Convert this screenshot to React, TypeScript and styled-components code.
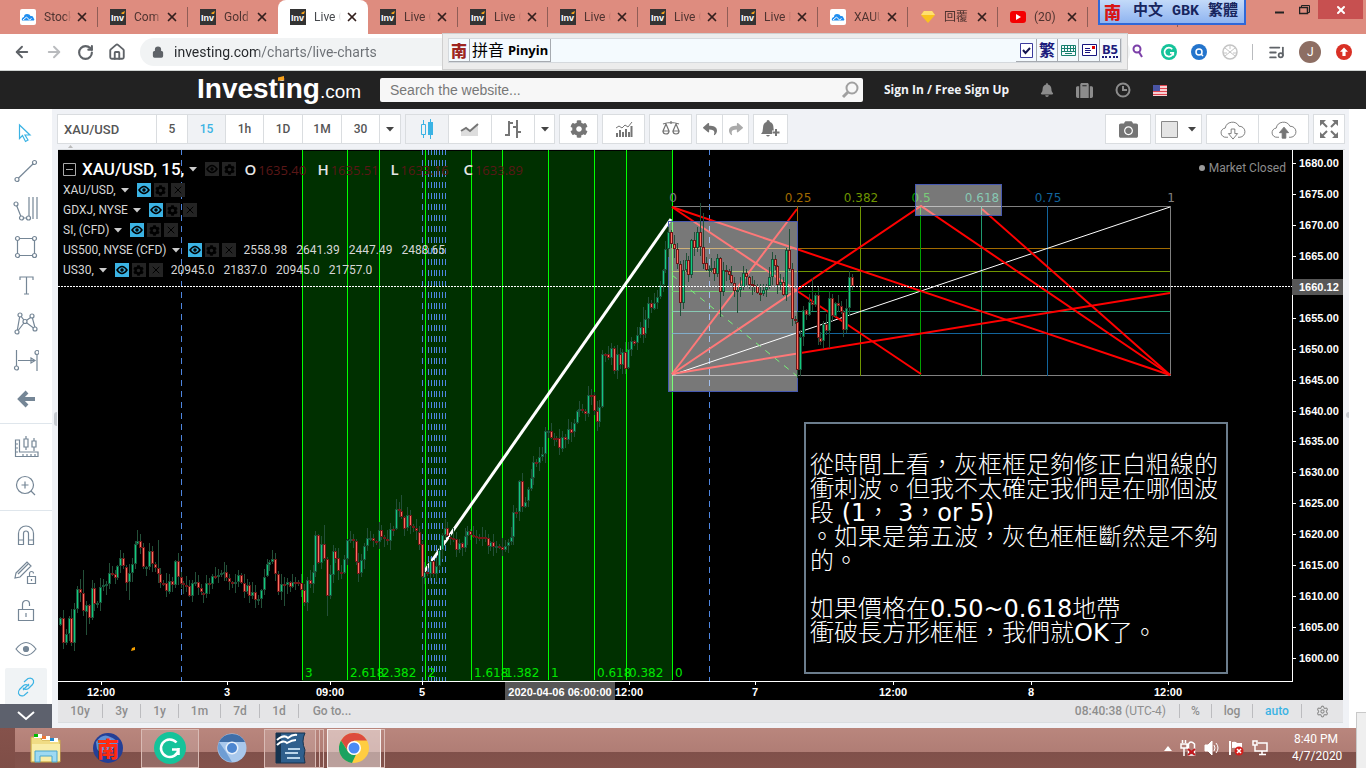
import { ReactNode } from "react"
import {
  ArrowLeft,
  ArrowRight,
  Home,
  ListMusic,
  Lock,
  RotateCw,
  Search,
  Settings,
  X
} from "lucide-react"
import {
  FaBell,
  FaCamera,
  FaCog,
  FaReply,
  FaShare,
  FaSuitcase
} from "react-icons/fa"
import styled, { createGlobalStyle, css } from "styled-components"

const ui = `Roboto, "Open Sans", "Noto Sans CJK TC", sans-serif`
const arial = `"Liberation Sans", Arial, sans-serif`
const verdana = `"DejaVu Sans", Verdana, "Noto Sans CJK TC", sans-serif`
const line = "#dadde0"
const slate = "#758696"
const accent = "#3bb3e4"

const GlobalStyle = createGlobalStyle`
  * {
    box-sizing: border-box;
  }

  body {
    margin: 0;
    overflow: hidden;
    font-family: ${ui};
    font-size: 12px;
  }

  button {
    margin: 0;
    padding: 0;
    border: 0;
    background: none;
    font: inherit;
    color: inherit;
  }

  a {
    color: inherit;
    text-decoration: none;
  }

  svg {
    display: block;
    flex: none;
  }
`

const Page = styled.div`
  display: flex;
  flex-direction: column;
  height: 100vh;
  background: #fff;
`

/* ---------- browser ---------- */

const TabStrip = styled.div`
  position: relative;
  display: flex;
  flex: none;
  height: 34px;
  padding-left: 8px;
  background: #de8c7f;
`

const TabButton = styled.div<{ $active?: boolean; $bare?: boolean }>`
  display: flex;
  align-items: center;
  flex: 0 1 90px;
  gap: 8px;
  min-width: 0;
  padding: 0 9px 0 12px;
  color: #4e3330;
  background: linear-gradient(#8f5d56, #8f5d56) right center / 1px 20px
    no-repeat;

  ${({ $active }) =>
    $active &&
    css`
      border-radius: 8px 8px 0 0;
      background: #fff;
      color: #45484c;
    `}
  ${({ $bare }) =>
    $bare &&
    css`
      background-image: none;
    `}
`

const TabTitle = styled.button`
  flex: 1;
  height: 18px;
  overflow: hidden;
  text-align: left;
  white-space: nowrap;
  line-height: 18px;
  font-size: 12px;
  mask-image: linear-gradient(90deg, #000 75%, transparent);
`

const TabClose = styled.button`
  margin-left: -4px;
  color: #33201e;
`

const WindowButtons = styled.div`
  position: absolute;
  top: 0;
  right: 3px;
  display: flex;
`

const WindowButton = styled.button<{ $close?: boolean }>`
  display: flex;
  align-items: center;
  justify-content: center;
  width: ${({ $close }) => ($close ? 45 : 26)}px;
  height: 19px;
  background: ${({ $close }) => ($close ? "#c75050" : "none")};
`

const ImeTitle = styled.div`
  position: absolute;
  top: 0;
  right: 120px;
  z-index: 2;
  display: flex;
  align-items: center;
  gap: 12px;
  width: 148px;
  height: 25px;
  padding-left: 4px;
  border: 2px solid #2f68d8;
  border-top: 0;
  background: linear-gradient(#c3daf9, #8fb4f0);
  color: #17255e;
  font: 700 15px/20px "Liberation Mono", "Noto Sans CJK TC", monospace;
  white-space: nowrap;
`

const NanMark = styled.span<{ $small?: boolean }>`
  color: ${({ $small }) => ($small ? "#9d2622" : "#d81515")};
  font: 900 17px/20px "Noto Sans CJK TC", sans-serif;
`

const AddressBar = styled.div`
  position: relative;
  display: flex;
  align-items: center;
  flex: none;
  height: 37px;
  padding: 0 14px 0 13px;
  border-bottom: 1px solid #cfd3d1;
  background: #fff;
  color: #5f6368;
`

const NavButtons = styled.div`
  display: flex;
  gap: 14px;
  margin-right: 14px;

  button:nth-child(2) {
    color: #b9bbbe;
  }
`

const Omnibox = styled.label`
  display: flex;
  align-items: center;
  flex: 1;
  gap: 10px;
  height: 28px;
  padding-left: 12px;
  border-radius: 14px;
  background: #f1f3f4;

  input {
    width: 260px;
    border: 0;
    padding: 0;
    outline: 0;
    font: 14px/20px ${ui};
    color: transparent;
    background: linear-gradient(90deg, #24272a 84px, #6b6f74 84px);
    background-clip: text;
    -webkit-background-clip: text;
  }
`

const Extensions = styled.div`
  display: flex;
  align-items: center;
  justify-content: space-between;
  width: 222px;
  padding-left: 2px;
`

const Avatar = styled.span`
  width: 22px;
  border-radius: 50%;
  background: #8d6e63;
  color: #fff;
  line-height: 22px;
  text-align: center;
`

const ImeBar = styled.div`
  position: absolute;
  top: -1px;
  right: 238px;
  left: 442px;
  height: 37px;
  padding: 4px 5px;
  border: 1px solid #cfcfcf;
  background: #ececec;
`

const ImeInner = styled.div`
  display: flex;
  height: 25px;
  border: 1px solid #d5d9dd;
  background: #f4fafe;
`

const ImeCell = styled.button<{ $wide?: boolean; $ink?: boolean }>`
  display: flex;
  align-items: center;
  justify-content: center;
  width: ${({ $wide }) => ($wide ? 81 : 21)}px;
  border: solid #a6aab0;
  border-width: 0 1px 1px 0;
  color: ${({ $ink }) => ($ink ? "#1b1b7c" : "#000")};
  font: 700 13px/20px "Noto Sans", "Noto Sans CJK TC", sans-serif;
  white-space: nowrap;

  span {
    margin-right: 4px;
    font-weight: 400;
    font-size: 16px;
  }
`

const ImeMark = styled(ImeCell)`
  span {
    margin: 0;
    font-weight: 900;
  }
`

const ImeChar = styled(ImeCell)`
  font-size: 16px;
`

const Underlined = styled.u`
  display: block;
  border-bottom: 2px dotted #1b1b7c;
  line-height: 14px;
  text-decoration: none;
`

const tick = (
  <svg width="13" height="15" fill="#fff" stroke="#3a3a9c">
    <path d="M.5.500h12v14H.5z" />
    <path d="M3 7l2.500 3L10 5" stroke="#161650" strokeWidth="2" fill="none" />
  </svg>
)

const ImeTools = styled.div`
  display: flex;
  margin-left: auto;

  label {
    position: relative;
    display: flex;
    align-items: center;
    justify-content: center;
    width: 21px;
    border: solid #a6aab0;
    border-width: 0 1px 1px 0;
  }

  input {
    position: absolute;
    inset: 0;
    margin: 0;
    opacity: 0;
  }
`

const grammarlyMark =
  "M22.500 10.500A8.800 8.800 0 1 0 24.500 17.500H18M24.500 16v7"

const Favicon = ({ kind }: { kind: string }) => {
  if (kind === "inv")
    return (
      <svg width="16" height="16" viewBox="0 0 16 16">
        <path d="M0 0h16v16H0z" fill="#333" />
        <text x="1" y="12" fill="#fff" fontSize="9" fontWeight="700" fontFamily="Liberation Sans">
          Inv
        </text>
        <path d="M11 4l4-2-1 3h-2z" fill="#f7a21b" />
      </svg>
    )
  if (kind === "cloud")
    return (
      <svg width="16" height="16" viewBox="0 0 16 16">
        <rect width="16" height="16" rx="2" fill="#fff" />
        <path
          d="M2 11.500q-1-2.500 2-3.500 0-3 3-3t3.500 2q3-.5 3 2 1.500 1 .5 2.500z"
          fill="#1e8df0"
        />
        <path d="M3 11l3.500-3 3 3 2-1.500" stroke="#fff" fill="none" />
      </svg>
    )
  if (kind === "gem")
    return (
      <svg width="16" height="16" viewBox="0 0 16 16">
        <path d="M4 2h8l3 4-7 8-7-8z" fill="#f9c31f" />
        <path d="M4 2h8l3 4H1z" fill="#ffe070" />
      </svg>
    )
  return (
    <svg width="16" height="16" viewBox="0 0 16 16">
      <rect y="2" width="16" height="12" rx="3" fill="#f40000" />
      <path d="M6 5l5 3-5 3z" fill="#fff" />
    </svg>
  )
}

const tabs = [
  ["cloud", "Stock"],
  ["inv", "Com"],
  ["inv", "Gold"],
  ["inv", "Live C"],
  ["inv", "Live C"],
  ["inv", "Live C"],
  ["inv", "Live C"],
  ["inv", "Live C"],
  ["inv", "Live F"],
  ["cloud", "XAUU"],
  ["gem", "回覆"],
  ["tube", "(20)"]
]

const Browser = () => (
  <>
    <TabStrip>
      {tabs.map(([kind, title], i) => (
        <TabButton key={i} $active={i === 3} $bare={i === 2}>
          <Favicon kind={kind} />
          <TabTitle>{title}</TabTitle>
          <TabClose aria-label="Close tab">
            <X size={14} strokeWidth={3} />
          </TabClose>
        </TabButton>
      ))}
      <TabButton />
      <ImeTitle>
        <NanMark>南</NanMark>
        <span>中文 GBK 繁體</span>
      </ImeTitle>
      <WindowButtons>
        <WindowButton aria-label="Minimize">
          <svg width="9" height="19">
            <path d="M0 12.500h9" stroke="#222" strokeWidth="2" />
          </svg>
        </WindowButton>
        <WindowButton aria-label="Restore">
          <svg width="12" height="12" fill="none" stroke="#222">
            <path d="M2.500 3V1.500h8v7H9" />
            <path d="M.5 3.500h8v6h-8z" strokeWidth="1.500" />
          </svg>
        </WindowButton>
        <WindowButton $close aria-label="Close">
          <X size={12} color="#fff" strokeWidth={4} />
        </WindowButton>
      </WindowButtons>
    </TabStrip>
    <AddressBar>
      <NavButtons>
        <button aria-label="Back">
          <ArrowLeft size={18} strokeWidth={2.5} />
        </button>
        <button aria-label="Forward">
          <ArrowRight size={18} strokeWidth={2.5} />
        </button>
        <button aria-label="Reload">
          <RotateCw size={17} strokeWidth={3} />
        </button>
        <button aria-label="Home">
          <Home size={18} strokeWidth={2.5} />
        </button>
      </NavButtons>
      <Omnibox>
        <Lock size={12} fill="#5f6368" strokeWidth={2.5} />
        <input aria-label="Address" defaultValue="investing.com/charts/live-charts" />
      </Omnibox>
      <Extensions>
        <svg width="14" height="16" fill="none" stroke="#7b3fa8" strokeWidth="2">
          <circle cx="5" cy="5" r="3.500" />
          <path d="M7 8l3 5" />
        </svg>
        <svg width="16" height="16" viewBox="0 0 32 32">
          <circle cx="16" cy="16" r="16" fill="#15c39a" />
          <path d={grammarlyMark} stroke="#fff" strokeWidth="3.5" fill="none" />
        </svg>
        <svg width="16" height="16" viewBox="0 0 16 16">
          <circle cx="8" cy="8" r="8" fill="#2374cc" />
          <circle cx="8" cy="8" r="3" fill="none" stroke="#fff" strokeWidth="1.5" />
          <path d="M10 10l2 2" stroke="#fff" strokeWidth="1.5" />
        </svg>
        <svg width="16" height="16" viewBox="0 0 16 16" fill="none" stroke="#c4c4c4">
          <circle cx="8" cy="8" r="7" strokeWidth="1.5" />
          <path d="M3 4l10 8M13 4L3 12M8 1v4M1 9h4M11 9h4" />
        </svg>
        <svg width="1" height="16">
          <path d="M.5 0v16" stroke="#b9bbbe" />
        </svg>
        <ListMusic size={17} strokeWidth={2.5} />
        <Avatar>J</Avatar>
        <svg width="16" height="16" viewBox="0 0 16 16">
          <circle cx="8" cy="8" r="8" fill="#d93025" />
          <path d="M8 3.500l4 4.300H9.600V12H6.400V7.800H4z" fill="#fff" />
        </svg>
      </Extensions>
      <ImeBar>
        <ImeInner>
          <ImeMark>
            <NanMark $small>南</NanMark>
          </ImeMark>
          <ImeCell $wide>
            <span>拼音</span>Pinyin
          </ImeCell>
          <ImeTools>
            <label>
              <input type="checkbox" defaultChecked aria-label="Input on" />
              {tick}
            </label>
            <ImeChar $ink>繁</ImeChar>
            <ImeCell aria-label="Keyboard">
              <svg width="15" height="11" stroke="#16806e" fill="none">
                <path d="M.5.500h14v10H.5zM1 3.500h13M1 6.500h13M3.500 1v6M6.500 1v6M9.500 1v6M12.500 1v6M4 8.500h7" />
              </svg>
            </ImeCell>
            <ImeCell aria-label="Mail">
              <svg width="15" height="12" stroke="#161680" fill="#fff">
                <path d="M.5.500h14v11H.5zM3 4.500h5M3 6.500h6M3 8.500h5" />
                <path d="M10 2h3v3h-3z" fill="#d00" stroke="none" />
              </svg>
            </ImeCell>
            <ImeCell $ink>
              <Underlined>B5</Underlined>
            </ImeCell>
          </ImeTools>
        </ImeInner>
      </ImeBar>
    </AddressBar>
  </>
)

/* ---------- site header ---------- */

const SiteHeader = styled.header`
  display: flex;
  align-items: center;
  flex: none;
  height: 38px;
  padding-left: 197px;
  background: #222;
  color: #fff;
`

const Logo = styled.a`
  position: relative;
  display: flex;
  align-items: baseline;
  width: 167px;
  margin-right: 16px;
  font: 700 28px/36px ${arial};

  small {
    font-weight: 400;
    font-size: 19px;
  }

  svg {
    position: absolute;
    top: 5px;
    left: 81px;
  }
`

const SearchBox = styled.label`
  display: flex;
  align-items: center;
  width: 483px;
  height: 24px;
  padding: 0 4px 0 10px;
  border-radius: 2px;
  background: #f7f7f7;
  color: #9a9a9a;

  input {
    flex: 1;
    padding: 0;
    border: 0;
    outline: 0;
    background: none;
    font: 14px/20px ${arial};

    &::placeholder {
      color: #777;
    }
  }
`

const SignIn = styled.a`
  width: 156px;
  margin-left: 21px;
  font: 700 12px/16px "Open Sans", sans-serif;
  color: #f0f3f7;
  white-space: nowrap;
`

const HeaderIcons = styled.div`
  display: flex;
  align-items: center;
  gap: 22px;
  color: #8c8c8c;
`

const Header = () => (
  <SiteHeader>
    <Logo href="#">
      Investing<small>.com</small>
      <svg width="6" height="6">
        <path d="M0 1.500L6 0v4L0 5z" fill="#f7a21b" />
      </svg>
    </Logo>
    <SearchBox>
      <input aria-label="Search" placeholder="Search the website..." />
      <svg width="18" height="18" fill="none" stroke="#a0a0a0" strokeWidth="2">
        <circle cx="11" cy="7" r="5.500" />
        <path d="M7 11l-5 5" strokeWidth="3" />
      </svg>
    </SearchBox>
    <SignIn href="#">Sign In / Free Sign Up</SignIn>
    <HeaderIcons>
      <FaBell size={14} />
      <FaSuitcase size={17} />
      <svg width="16" height="16" fill="none" stroke="#8c8c8c" strokeWidth="2">
        <circle cx="8" cy="8" r="6.500" />
        <path d="M8 4v4h4" />
      </svg>
      <svg width="14" height="11">
        <path d="M0 0h14v11H0z" fill="#fff" />
        <path d="M0 .5h14M0 3.500h14M0 6.500h14M0 9.500h14" stroke="#e0454f" strokeWidth="1.500" />
        <path d="M0 0h7v6H0z" fill="#4a55a5" />
      </svg>
    </HeaderIcons>
  </SiteHeader>
)

/* ---------- drawing tools ---------- */

const Body = styled.main`
  display: flex;
  flex: 1;
  min-height: 0;
`

const Sidebar = styled.nav`
  position: relative;
  flex: none;
  width: 52px;
  padding-top: 5px;
  overflow: hidden;
  background: #fff;
`

const Tool = styled.button<{ $on?: boolean; $first?: boolean }>`
  display: flex;
  align-items: center;
  justify-content: center;
  width: 42px;
  height: 38px;
  margin: 0 5px;
  border-radius: 2px;
  background: ${({ $on }) => ($on ? "#f0f3f5" : "none")};
  color: ${({ $on, $first }) => ($on || $first ? accent : slate)};
`

const Divider = styled.hr`
  height: 1px;
  margin: 5px 0;
  border: 0;
  background: #dfe6ec;
`

const SidebarMore = styled.button`
  position: absolute;
  bottom: 0;
  left: 0;
  display: flex;
  align-items: center;
  justify-content: center;
  width: 52px;
  height: 24px;
  background: #5d616d;
  color: #fff;
`

const Draw = ({ children }: { children: ReactNode }) => (
  <svg
    width="26"
    height="26"
    viewBox="0 0 26 26"
    fill="none"
    stroke="currentColor"
    strokeWidth="1.2"
  >
    {children}
  </svg>
)

const dots = (points: number[][]) =>
  points.map(([x, y]) => <circle key={`${x}-${y}`} cx={x} cy={y} r="2" fill="#fff" />)

const drawTools: [string, ReactNode][] = [
  ["Cursor", <path d="M6.500 5v13.500l3-3 3 6 2.500-1.500-3-5h5z" />],
  ["Trend line", <><path d="M4 21.500L21.500 4.500" />{dots([[4, 21.500], [21.500, 4.500]])}</>],
  ["Pitchfork", <><path d="M3 8l5.500 14h7.500V1M20 1v22M24 1v22" />{dots([[3, 8], [8.500, 22], [15.500, 22]])}</>],
  ["Shape", <><path d="M4.500 4.500h17v17h-17z" />{dots([[4.500, 4.500], [21.500, 4.500], [4.500, 21.500], [21.500, 21.500]])}</>],
  ["Text", <path d="M7 8V5h13v3M13.500 5v17M11 22h5" />],
  ["Pattern", <><path d="M4 22L7 5l5 6.500 7-5 3.500 13L12 11.500z" />{dots([[4, 22], [7, 5], [12, 11.500], [19, 6], [22, 19]])}</>],
  ["Measure", <><path d="M3.500 2v18M24 6v17M5 12.500h16M18 10l4 2.500-4 2.500z" />{dots([[3.500, 20], [24, 4.500]])}</>],
  ["Back", <path d="M14 6l-7 7 7 7M8 13h14" strokeWidth="4" />]
]

const chartTools: [string, ReactNode][] = [
  ["Scales", <path d="M2.500 5v16.500H25v-4.500H6.500V5zM3 9h2M3 13h2M3 17h2M10 19v2M14 19v2M18 19v2M22 19v2M11 4h4v8h-4zM13 1v3M13 12v3M19 6h4v6h-4zM21 3v3M21 12v4" />],
  ["Zoom in", <><circle cx="12" cy="12" r="8.500" /><path d="M8.500 12h7M12 8.500v7M18 18l4 4" /></>]
]

const lockTools: [string, ReactNode][] = [
  ["Magnet", <path d="M5.500 22.500V11.500a7.500 7.500 0 0 1 15 0v11h-5V11.500a2.500 2.500 0 0 0-5 0v11zM5.500 18h5M15.500 18h5" />],
  ["Lock drawings", <path d="M3 13L14 2l4 4L7 17l-5 1zM5 14L15 4M14.500 16.500h8v7h-8zM16.500 16v-2.500a2 2 0 0 1 4 0M18.500 19v2" />],
  ["Lock", <path d="M5.500 11.500h15v11h-15zM9.500 11V6a3.500 3.500 0 0 1 7 0v2M13 15v4" />],
  ["Visibility", <><path d="M3 13q10-13 20 0q-10 13-20 0z" /><circle cx="13" cy="13" r="2.500" fill="currentColor" /></>],
  ["Link", <path d="M11 8l4-3.500q4-1.500 5.500 2 .5 2-1 4l-4 4q-3 2-5.500-.5M15 18l-4 3.500q-4 1.500-5.500-2-.5-2 1-4l4-4q3-2 5.500.500M10 16l6-6" />]
]

const renderTools = (tools: [string, ReactNode][]) =>
  tools.map(([name, icon]) => (
    <Tool key={name} aria-label={name} $on={name === "Link"} $first={name === "Cursor"}>
      <Draw>{icon}</Draw>
    </Tool>
  ))

/* ---------- chart toolbar ---------- */

const Workspace = styled.section`
  position: relative;
  display: flex;
  flex: 1;
  flex-direction: column;
  min-width: 0;
  margin-right: 17px;
  padding: 5px 4px 5px 5px;
  background: #f0f2f6;
`

const Handle = styled.div<{ $right?: boolean }>`
  position: absolute;
  top: 303px;
  ${({ $right }) => ($right ? "right: 0" : "left: 2px")};
  width: 3px;
  height: ${({ $right }) => ($right ? 6 : 14)}px;
  border-radius: 3px 0 0 3px;
  background: #c6cad0;
`

const Toolbar = styled.div`
  display: flex;
  flex: none;
  gap: 4px;
  height: 30px;
`

const Group = styled.div<{ $push?: boolean }>`
  display: flex;
  border: 1px solid ${line};
  background: #fff;
  margin-left: ${({ $push }) => ($push ? "auto" : 0)};
`

const ToolbarButton = styled.button<{ $w: number; $on?: boolean; $symbol?: boolean }>`
  display: flex;
  align-items: center;
  justify-content: ${({ $symbol }) => ($symbol ? "flex-start" : "center")};
  gap: 10px;
  width: ${({ $w }) => $w}px;
  padding-left: ${({ $symbol }) => ($symbol ? 6 : 0)}px;
  color: ${({ $on }) => ($on ? accent : "#555")};
  background: ${({ $on }) => ($on ? "#f0f2f5" : "none")};
  font-weight: 500;
  font-size: ${({ $symbol }) => ($symbol ? 13 : 12)}px;

  & + & {
    border-left: 1px solid ${line};
  }
`

const Shelf = styled.div`
  flex: none;
  height: 6px;
  margin-left: 1px;
  border-bottom: 1px solid ${line};

  svg {
    margin-left: 10px;
  }
`

const Caret = ({ color = "#444" }: { color?: string }) => (
  <svg width="8" height="5">
    <path d="M0 0h8L4 4.500z" fill={color} />
  </svg>
)

const intervals: [string, number][] = [
  ["5", 31],
  ["15", 38],
  ["1h", 38],
  ["1D", 39],
  ["1M", 39],
  ["30", 38]
]

const gray = "#757575"
const cloud = "M8 21H6a5 5 0 0 1-1-10 8 8 0 0 1 15-2A6 6 0 0 1 21 21h-2"

const ChartToolbar = () => (
  <Toolbar>
    <Group>
      <ToolbarButton $w={98} $symbol>
        XAU/USD
      </ToolbarButton>
      {intervals.map(([name, width]) => (
        <ToolbarButton key={name} $w={width} $on={name === "15"}>
          {name}
        </ToolbarButton>
      ))}
      <ToolbarButton $w={21} aria-label="More intervals">
        <Caret />
      </ToolbarButton>
    </Group>
    <Group>
      <ToolbarButton $w={42} $on aria-label="Candles">
        <svg width="14" height="20" fill="none" stroke={accent}>
          <path d="M1.500 5.500h4v10h-4zM3.500 1v4M3.500 16v3M10.500 0v20" />
          <path d="M8 3h5v13H8z" fill={accent} stroke="none" />
        </svg>
      </ToolbarButton>
      <ToolbarButton $w={43} aria-label="Area">
        <svg width="20" height="14">
          <path d="M1 10l5-3 4 2 8-7v12H1z" fill="#ddd" />
          <path d="M1 9l5-3 4 3 8-7" stroke={gray} strokeWidth="2" fill="none" />
        </svg>
      </ToolbarButton>
      <ToolbarButton $w={43} aria-label="Bars">
        <svg width="18" height="20" fill="none" stroke={gray} strokeWidth="2">
          <path d="M5 2v15M1 16h4M5 4h4M13 1v18M9 8h4M13 13h4" />
        </svg>
      </ToolbarButton>
      <ToolbarButton $w={20} aria-label="More styles">
        <Caret />
      </ToolbarButton>
    </Group>
    <Group>
      <ToolbarButton $w={37} aria-label="Settings">
        <FaCog size={18} color={gray} />
      </ToolbarButton>
    </Group>
    <Group>
      <ToolbarButton $w={41} aria-label="Indicators">
        <svg width="18" height="16" fill="none" stroke={gray}>
          <path d="M2 16v-4M5 16V9M8 16v-5M11 16V8M14 16v-5M16.500 16V5" strokeWidth="2" />
          <path d="M1 7l3-2 3 2 3-3 3 2 4-5" />
        </svg>
      </ToolbarButton>
    </Group>
    <Group>
      <ToolbarButton $w={41} aria-label="Compare">
        <svg width="18" height="16" fill="none" stroke={gray} strokeWidth="1.200">
          <path d="M1 3q8-3 16 0M9 0v3M4 3l-3 7h6zM14 3l-3 7h6zM1 10q0 3 3 3t3-3M11 10q0 3 3 3t3-3" />
        </svg>
      </ToolbarButton>
    </Group>
    <Group>
      <ToolbarButton $w={25} aria-label="Undo">
        <FaReply size={14} color={gray} />
      </ToolbarButton>
      <ToolbarButton $w={26} aria-label="Redo">
        <FaShare size={14} color="#aaa" />
      </ToolbarButton>
    </Group>
    <Group>
      <ToolbarButton $w={33} aria-label="Add alert">
        <svg width="20" height="18">
          <path d="M7 0q1.500 0 2 2 3.500 1 3.500 6 0 4 1.500 6H0q2-2 2-6 0-5 3.500-6Q5.500 0 7 0zM5 15h4q-2 3-4 0z" fill={gray} />
          <path d="M11 12.500h8M15 9v8" stroke="#fff" strokeWidth="4" />
          <path d="M11.500 12.500h7M15 9v7" stroke={gray} strokeWidth="2" />
        </svg>
      </ToolbarButton>
    </Group>
    <Group $push>
      <ToolbarButton $w={44} aria-label="Snapshot">
        <FaCamera size={19} color={gray} />
      </ToolbarButton>
    </Group>
    <Group>
      <ToolbarButton $w={45} aria-label="Background">
        <svg width="17" height="17">
          <path d="M.5.500h16v16H.5z" fill="#e4e4e4" stroke="#888" />
        </svg>
        <Caret />
      </ToolbarButton>
    </Group>
    <Group>
      <ToolbarButton $w={51} aria-label="Load">
        <svg width="28" height="22" viewBox="-1 0 29 24" fill="none" stroke={gray}>
          <path d={cloud} />
          <path d="M11.500 12v5h-3l5 6 5-6h-3v-5z" />
        </svg>
      </ToolbarButton>
      <ToolbarButton $w={50} aria-label="Save">
        <svg width="28" height="22" viewBox="-1 0 29 24" fill="none" stroke={gray}>
          <path d={cloud} />
          <path d="M11.500 22v-6h-3l5-6 5 6h-3v6z" fill={gray} />
        </svg>
      </ToolbarButton>
    </Group>
    <Group>
      <ToolbarButton $w={30} aria-label="Full screen">
        <svg width="18" height="18" fill={gray} stroke={gray} strokeWidth="2">
          <path d="M0 0h6L0 6zM18 0v6l-6-6zM0 18v-6l6 6zM18 18h-6l6-6z" stroke="none" />
          <path d="M2 2l5 5M16 2l-5 5M2 16l5-5M16 16l-5-5" />
        </svg>
      </ToolbarButton>
    </Group>
  </Toolbar>
)

/* ---------- price chart ---------- */

const Panel = styled.div`
  position: relative;
  flex: 1;
  min-height: 0;
  overflow: hidden;
  margin-left: 1px;
  margin-right: 2px;
  background: #000;
`

const Plot = styled.svg`
  width: 100%;
  height: 100%;

  line,
  rect,
  path {
    shape-rendering: crispEdges;
  }

  .smooth {
    shape-rendering: auto;
  }
`

// closes are thirds of a pixel below `top`
const sessions = [
  {
    top: 430,
    closes: [
      565, 640, 613, 565, 640, 538, 478, 490, 545, 525, 563, 473, 520, 518, 470,
      465, 462, 430, 432, 445, 408, 385, 410, 458, 430, 402, 342, 332, 352, 413,
      410, 363, 402, 413, 432, 458, 460, 485, 452, 465, 393, 440, 460, 465, 468,
      497, 458, 457, 475, 488, 492, 460, 462, 437, 437, 435, 430, 427, 445, 457,
      457, 455, 435, 458, 485, 465, 498, 487, 512, 507, 480, 440, 403, 395, 387,
      433, 487, 463, 465, 455, 470, 455, 455, 458
    ]
  },
  {
    top: 400,
    closes: [
      570, 610, 540, 552, 517, 405, 490, 433, 478, 590, 523, 452, 475, 515, 520,
      478, 420, 418, 423, 485, 520, 480, 438, 415, 413, 422, 425, 390, 412, 417,
      422, 387, 388, 327, 333, 350, 385, 345, 378, 385, 395, 433, 533, 515, 520,
      482, 522, 497, 450, 405, 385, 410, 415, 418, 450, 430, 445, 408, 392, 405,
      408, 410, 410, 412, 415, 440, 425, 440, 438, 440, 450, 437, 425, 410, 335,
      335, 242, 320, 305, 268, 235, 187, 190, 172, 163, 93, 92, 113, 115, 115,
      145, 110, 120, 87, 98, 70, 33, 27, 33, 43, -15
    ]
  },
  {
    top: 150,
    closes: [
      735, 783, 815, 770, 612, 612, 625, 595, 663, 612, 645, 605, 655, 598, 572,
      580, 555, 530, 553, 508, 460, 475, 458, 440, 405, 360, 297, 247, 283, 298,
      343, 460, 360, 330, 375, 270, 293, 245, 290, 340, 362, 357, 355, 373, 325,
      427, 360, 362, 375, 400, 423, 420, 410, 368, 380, 403, 405, 408, 430, 433,
      420, 410, 382, 328, 348, 405, 395, 435, 300, 358, 508, 515, 660, 560, 480,
      495, 457, 465, 435, 563, 575, 523, 545, 445, 500, 460, 468, 485, 540, 475,
      382, 410
    ]
  }
]

const closes = sessions.flatMap(s => s.closes.map(c => s.top + c / 3))
const firstX = 60
const lastX = 852
const step = (lastX - firstX) / (closes.length - 1)

// long wicks: column, price line they reach
const spikes: [number, number][] = [
  [137, 530], [157, 540], [83, 570], [86, 635], [128, 600], [258, 605],
  [284, 606], [326, 616], [324, 525], [402, 495], [421, 600], [445, 520],
  [643, 307], [700, 203], [703, 213], [680, 316], [721, 317], [738, 313],
  [789, 229], [811, 278], [828, 348], [850, 271], [801, 376]
]

const buildCandles = () => {
  const out = { wick: "", upEdge: "", downEdge: "", up: "", down: "" }
  closes.forEach((close, i) => {
    const open = i ? closes[i - 1] : 625
    const x = Math.round(firstX + i * step)
    const top = Math.round(Math.min(open, close))
    const height = Math.max(2, Math.round(Math.abs(open - close)))
    const high = top - 1 - ((i * 7) % 10)
    const low = top + height + 1 + ((i * 5) % 9)
    out.wick += `M${x + 0.5} ${high}V${low}`
    const edge = `M${x - 1} ${top}h3v${height}h-3z`
    const fill = height > 2 ? `M${x} ${top + 1}h1v${height - 2}h-1z` : ""
    if (close < open) {
      out.upEdge += edge
      out.up += fill
    } else {
      out.downEdge += edge
      out.down += fill
    }
  })
  spikes.forEach(([x, y]) => {
    const i = Math.min(closes.length - 1, Math.round((x - firstX) / step))
    out.wick += `M${Math.round(firstX + i * step) + 0.5} ${y}V${closes[i]}`
  })
  return out
}

const candles = buildCandles()

const timeZones: [number, string][] = [
  [302, "3"],
  [347, "2.618"],
  [379, "2.382"],
  [425, "2"],
  [471, "1.618"],
  [502, "1.382"],
  [548, "1"],
  [594, "0.618"],
  [626, "0.382"],
  [672, "0"]
]

const breaks = [181, 422, 428, 431, 434, 436, 439, 442, 445, 709]

const gannColumns: [number, string, string][] = [
  [672, "0", "#808080"],
  [797, "0.25", "#a06a00"],
  [860, "0.382", "#6f9500"],
  [920, "0.5", "#00a000"],
  [981, "0.618", "#1f9970"],
  [1047, "0.75", "#12649c"],
  [1170, "1", "#808080"]
]

const gannRows: [number, string][] = [
  [206, "#808080"],
  [248, "#a06a00"],
  [271, "#6f9500"],
  [291, "#00a000"],
  [311, "#1f9970"],
  [333, "#12649c"],
  [375, "#808080"]
]

const fans = [
  "M672 207L1170 375",
  "M672 207L921 374",
  "M672 374L797 209",
  "M672 374L921 206L1170 375",
  "M672 374L1170 293",
  "M982 209L1170 375"
]

const times: [number, string][] = [
  [101, "12:00"],
  [227, "3"],
  [330, "09:00"],
  [422, "5"],
  [560, ""],
  [629, "12:00"],
  [755, "7"],
  [893, "12:00"],
  [1031, "8"],
  [1168, "12:00"]
]

const prices = Array.from({ length: 17 }, (_, i) => 1680 - i * 5)

const axisText = {
  fill: "#fff",
  fontFamily: "Liberation Sans",
  fontWeight: 700,
  fontSize: 11
}
const levelText = { fontFamily: "DejaVu Sans", fontSize: 12 }

const PriceChart = () => (
  <Plot viewBox="58 150 1285 550" preserveAspectRatio="xMinYMin meet">
    <rect x="302" y="151" width="370" height="530" fill="#003000" />
    {breaks.map(x => (
      <path key={x} d={`M${x + 0.5} 150V681`} stroke="#4f86e0" strokeDasharray="6 5" strokeDashoffset="1" />
    ))}
    {timeZones.map(([x, label]) => (
      <g key={x}>
        <path d={`M${x + 0.5} 150V680`} stroke="#00ff00" />
        <text x={x + 3} y="677" fill="#00e600" {...levelText}>
          {label}
        </text>
      </g>
    ))}
    {gannRows.map(([y, color]) => (
      <path key={y} d={`M672 ${y + 0.5}H1171`} stroke={color} />
    ))}
    {gannColumns.map(([x, label, color]) => (
      <g key={x}>
        {x > 672 && <path d={`M${x + 0.5} 206V376`} stroke={color} />}
        <text x={x + 1} y="202" fill={color} textAnchor="middle" {...levelText}>
          {label}
        </text>
      </g>
    ))}
    <path className="smooth" d="M672 375L1170 207" stroke="#fff" fill="none" />
    <path className="smooth" d="M672 275L797 376" stroke="#00e600" strokeDasharray="6 6" />
    {fans.map(d => (
      <path key={d} className="smooth" d={d} stroke="#ff0000" strokeWidth="2" fill="none" />
    ))}
    <path className="smooth" d="M424 572L671 219" stroke="#fff" strokeWidth="3" />
    <g fill="#fff" fillOpacity="0.47" stroke="#4658b0">
      <rect x="668.5" y="221.5" width="129" height="170" />
      <rect x="915.5" y="184.5" width="86" height="31" />
    </g>
    <path d={candles.wick} stroke="#234f38" />
    <path d={candles.upEdge} fill="#17553a" />
    <path d={candles.downEdge} fill="#701616" />
    <path d={candles.up} fill="#12c97f" />
    <path d={candles.down} fill="#ff6f60" />
    <path className="smooth" d="M131 651l1-3 3-1v3z" fill="#f5a000" />
    <path d="M58 286.500H1292" stroke="#fff" strokeDasharray="2 1" />

    <path d="M58 681.500H1292.500V150" stroke="#fff" fill="none" />
    {prices.map((price, i) => {
      const y = Math.round(163 + i * 30.94)
      return (
        <g key={price}>
          <path d={`M1292 ${y + 0.5}h4`} stroke="#fff" />
          {price !== 1660 && (
            <text x="1299" y={y + 4} {...axisText}>
              {price.toFixed(2)}
            </text>
          )}
        </g>
      )
    })}
    <rect x="1292" y="279" width="51" height="16" fill="#575757" />
    <text x="1299" y="291" {...axisText}>
      1660.12
    </text>
    {times.map(([x, label]) => (
      <g key={x}>
        <path d={`M${x + 0.5} 682v3`} stroke="#fff" />
        <text x={x} y="696" textAnchor="middle" {...axisText}>
          {label}
        </text>
      </g>
    ))}
    <rect x="505" y="682" width="110" height="18" fill="#575757" />
    <text x="560" y="696" textAnchor="middle" {...axisText}>
      2020-04-06 06:00:00
    </text>
  </Plot>
)

const Legend = styled.div`
  position: absolute;
  top: 8px;
  left: 5px;
  color: #d6d6d6;
`

const LegendRow = styled.div<{ $title?: boolean }>`
  display: flex;
  align-items: center;
  height: ${({ $title }) => ($title ? 22 : 20)}px;
  white-space: nowrap;
`

const Symbol = styled.span<{ $title?: boolean }>`
  margin: 0 5px 0 ${({ $title }) => ($title ? 6 : 0)}px;
  color: ${({ $title }) => ($title ? "#fff" : "#d6d6d6")};
  font-size: ${({ $title }) => ($title ? 17 : 12)}px;
  font-weight: ${({ $title }) => ($title ? 500 : 400)};
`

const Toggles = styled.span`
  display: flex;
  gap: 3px;
  margin: 0 8px;
`

const Toggle = styled.button<{ $on?: boolean }>`
  display: flex;
  align-items: center;
  justify-content: center;
  width: 14px;
  height: 14px;
  background: ${({ $on }) => ($on ? accent : "#242424")};
  color: #000;
`

const Values = styled.span`
  display: flex;
  gap: 9px;
`

const Quote = styled.span`
  width: 73px;
  color: #5a1717;
  font: 13px/20px "Open Sans", sans-serif;

  b {
    margin-right: 2px;
    color: #e6e6e6;
    font-weight: 600;
    font-size: 15px;
  }
`

const Quotes = styled.span`
  display: flex;
`

const Eye = () => (
  <svg width="12" height="10" fill="none" stroke="#000" strokeWidth="1.500">
    <path d="M1 5q5-7 10 0q-5 7-10 0z" />
    <circle cx="6" cy="5" r="1" />
  </svg>
)

const series: [string, string[]][] = [
  ["XAU/USD,", []],
  ["GDXJ, NYSE", []],
  ["SI, (CFD)", []],
  ["US500, NYSE (CFD)", ["2558.98", "2641.39", "2447.49", "2488.65"]],
  ["US30,", ["20945.0", "21837.0", "20945.0", "21757.0"]]
]

const quotes = [
  ["O", "1635.40"],
  ["H", "1635.51"],
  ["L", "1633.16"],
  ["C", "1633.89"]
]

const ChartLegend = () => (
  <Legend>
    <LegendRow $title>
      <svg width="13" height="13" fill="none" stroke="#aaa">
        <path d="M.5.500h12v12H.5zM3 6.500h7" />
      </svg>
      <Symbol $title>XAU/USD, 15,</Symbol>
      <Caret color="#ccc" />
      <Toggles>
        <Toggle aria-label="Hide">
          <Eye />
        </Toggle>
        <Toggle aria-label="Format">
          <FaCog size={11} />
        </Toggle>
      </Toggles>
      <Quotes>
        {quotes.map(([name, value]) => (
          <Quote key={name}>
            <b>{name}</b>
            {value}
          </Quote>
        ))}
      </Quotes>
    </LegendRow>
    {series.map(([name, values]) => (
      <LegendRow key={name}>
        <Symbol>{name}</Symbol>
        <Caret color="#ccc" />
        <Toggles>
          <Toggle $on aria-label="Hide">
            <Eye />
          </Toggle>
          <Toggle aria-label="Format">
            <FaCog size={11} />
          </Toggle>
          <Toggle aria-label="Remove">
            <X size={12} />
          </Toggle>
        </Toggles>
        <Values>
          {values.map((value, i) => (
            <span key={i}>{value}</span>
          ))}
        </Values>
      </LegendRow>
    ))}
  </Legend>
)

const MarketStatus = styled.div`
  position: absolute;
  top: 10px;
  right: 57px;
  display: flex;
  align-items: center;
  gap: 4px;
  color: #8c8c8c;
  line-height: 16px;

  &::before {
    content: "";
    width: 6px;
    height: 6px;
    border-radius: 50%;
    background: #9a9a9a;
  }
`

const Note = styled.p`
  position: absolute;
  top: 272px;
  left: 746px;
  width: 424px;
  height: 252px;
  margin: 0;
  padding: 29px 4px;
  border: 2px solid #6b7d8d;
  color: #fff;
  font: 300 24px/24px ${verdana};
  white-space: pre;

  span {
    font-weight: 400;
  }
`

const noteText = `從時間上看，灰框框足夠修正白粗線的
衝刺波。但我不太確定我們是在哪個波
段 (1， 3，or 5)
。如果是第五波，灰色框框斷然是不夠
的。

如果價格在0.50~0.618地帶
衝破長方形框框，我們就OK了。`

/* ---------- range bar ---------- */

const RangeBar = styled.div`
  display: flex;
  align-items: center;
  flex: none;
  height: 23px;
  margin: 0 2px 0 1px;
  border-bottom: 1px solid ${line};
  background: #e5e5e7;
  color: #8e8e8e;
`

const Range = styled.button<{ $w: number; $on?: boolean; $last?: boolean }>`
  display: flex;
  align-items: center;
  justify-content: center;
  width: ${({ $w }) => $w}px;
  height: 14px;
  border-right: ${({ $last }) => ($last ? 0 : 1)}px solid #bcbcbf;
  color: ${({ $on }) => ($on ? accent : "#8e8e8e")};
  font-weight: 500;
`

const Clock = styled.div`
  margin-left: auto;
  padding-right: 13px;
  border-right: 1px solid #bcbcbf;
  font-size: 12px;
  line-height: 14px;

  b {
    font-weight: 500;
  }
`

const ranges: [string, number][] = [
  ["10y", 45],
  ["3y", 38],
  ["1y", 38],
  ["1m", 42],
  ["7d", 39],
  ["1d", 39]
]

/* ---------- taskbar ---------- */

const Taskbar = styled.footer`
  position: relative;
  display: flex;
  align-items: center;
  flex: none;
  height: 40px;
  padding-left: 17px;
  background:
    linear-gradient(#85524b, #7f4e47) left / 15px 100% no-repeat,
    linear-gradient(#b9867d, #b07d75 24px, #80504a 24px, #84534c);
  color: #fff;
`

const TaskButton = styled.button<{ $w?: number; $open?: boolean; $active?: boolean }>`
  display: flex;
  align-items: center;
  justify-content: center;
  width: ${({ $w = 62 }) => $w}px;
  height: 39px;

  ${({ $open }) =>
    $open &&
    css`
      border: 1px solid #d9bbb5;
      background: rgba(255, 255, 255, 0.15);
    `}
  ${({ $active }) =>
    $active &&
    css`
      margin-left: 3px;
      border: 1px solid #f6eeec;
      background: rgba(255, 255, 255, 0.45);
    `}
`

const Stack = styled.div`
  width: 4px;
  height: 39px;
  border: 1px solid #d9bbb5;
  border-left: 0;
`

const Tray = styled.div`
  display: flex;
  align-items: center;
  gap: 8px;
  margin-left: auto;
  margin-right: 26px;

  time {
    width: 48px;
    margin-left: 16px;
    text-align: center;
    line-height: 17px;
    white-space: nowrap;
  }
`

const CornerWindow = styled.div`
  position: absolute;
  right: 0;
  bottom: 0;
  width: 10px;
  height: 56px;
  border: solid #c9c9c9;
  border-width: 1px 0 0 1px;
  background: #efefef;
`

const TaskbarRow = () => (
  <Taskbar>
    <TaskButton $w={58} aria-label="Explorer">
      <svg width="32" height="30">
        <path d="M1 4h9l2 3h18v22H1z" fill="#f0dc84" stroke="#c9a94a" />
        <path d="M4 1h8v4H4zM12 3h8v4h-8zM20 5h8v4h-8z" fill="#fff" />
        <path d="M4 1h4v3H4z" fill="#0b0" />
        <path d="M12 3h4v3h-4z" fill="#e73" />
        <path d="M20 5h4v3h-4z" fill="#28c" />
        <path d="M2 11h28v17H2z" fill="#f9eda8" />
        <path d="M5 18h22v11h-5v-6H10v6H5z" fill="#9ed9f2" stroke="#4aa6cc" />
      </svg>
    </TaskButton>
    <TaskButton $w={66} aria-label="Input method">
      <svg width="32" height="32">
        <circle cx="16" cy="16" r="15" fill="#243f96" />
        <path d="M4 10q6-8 12-6t9 5-6 9-14-1z" fill="#5f8fd6" />
        <text x="5" y="25" fontSize="22" fontWeight="900" fill="#ff2a10" fontFamily="Noto Sans CJK TC">
          南
        </text>
      </svg>
    </TaskButton>
    <TaskButton $w={58} $open aria-label="Grammarly">
      <svg width="32" height="32">
        <circle cx="16" cy="16" r="16" fill="#15c39a" />
        <path d={grammarlyMark} stroke="#fff" strokeWidth="2.500" fill="none" />
      </svg>
    </TaskButton>
    <TaskButton $w={65} aria-label="Chromium">
      <svg width="30" height="30" viewBox="0 0 30 30">
        <circle cx="15" cy="15" r="14.500" fill="#a9c8ec" />
        <path d="M2 9A14.500 14.500 0 0 1 28 9H15z" fill="#3f6ea8" />
        <path d="M2 9l7 10 6 10A14.500 14.500 0 0 1 2 9z" fill="#6f9dd3" />
        <circle cx="15" cy="15" r="6.500" fill="#e8f0fa" />
        <circle cx="15" cy="15" r="5" fill="#4d86d0" />
      </svg>
    </TaskButton>
    <TaskButton $w={52} $open aria-label="Writer">
      <svg width="32" height="32">
        <path d="M2 1h29q-4 8 0 17-2 6 0 13H2z" fill="#2f5f8d" stroke="#16334f" />
        <path d="M2 1h5v30H2z" fill="#16334f" />
        <path d="M3 8q7-6 11-2 5-4 9-3M3 13q6-6 10-2 5-3 9-3" stroke="#fff" strokeWidth="2" fill="none" />
        <path d="M14 17h12M11 21h13M13 26h13" stroke="#b9d4ea" strokeWidth="2" />
      </svg>
    </TaskButton>
    <Stack />
    <Stack />
    <TaskButton $w={54} $active aria-label="Chrome">
      <svg width="30" height="30" viewBox="0 0 30 30">
        <circle cx="15" cy="15" r="15" fill="#ffcd41" />
        <path d="M2 7.500A15 15 0 0 1 28 7.500H15L9 18z" fill="#dd4b3e" />
        <path d="M2 7.500L9 18.500q3 4 8 3L13 30A15 15 0 0 1 2 7.500z" fill="#1aa260" />
        <circle cx="15" cy="15" r="7" fill="#fff" />
        <circle cx="15" cy="15" r="5.500" fill="#4a8af4" />
      </svg>
    </TaskButton>
    <Stack />
    <Tray>
      <svg width="8" height="5">
        <path d="M0 5l4-5 4 5z" fill="#fff" />
      </svg>
      <svg width="16" height="16" fill="none" stroke="#fff">
        <path d="M2.500 0v3M5.500 0v3M1 4h6v4H1zM4 8v8M8.500 15V4q2-4 6 0v11z" strokeWidth="1.500" />
        <path d="M8 9l7 6M15 9l-7 6" stroke="#c4161c" strokeWidth="2" />
      </svg>
      <svg width="16" height="16" fill="none" stroke="#fff">
        <path d="M1 5h3l4-4v14l-4-4H1z" fill="#fff" />
        <path d="M10 5q2 3 0 6M12 3q4 5 0 10" />
      </svg>
      <svg width="16" height="16">
        <path d="M2 1v14" stroke="#fff" strokeWidth="2" />
        <path d="M4 2q4-1 5 1h5v6H9Q8 7 4 8z" fill="#fff" />
        <circle cx="11" cy="11" r="4.500" fill="#d6201c" />
        <path d="M9 9l4 4M13 9l-4 4" stroke="#fff" strokeWidth="1.500" />
      </svg>
      <svg width="16" height="16" fill="none" stroke="#fff" strokeWidth="1.500">
        <path d="M6 3h9v8H5M10 11v3M7 14.500h7M1 1h4v4H1zM3 5v6h3" />
      </svg>
      <time>
        8:40 PM
        <br />
        4/7/2020
      </time>
    </Tray>
    <CornerWindow />
  </Taskbar>
)

export default function App() {
  return (
    <Page>
      <GlobalStyle />
      <Browser />
      <Header />
      <Body>
        <Sidebar>
          {renderTools(drawTools)}
          <Divider />
          {renderTools(chartTools)}
          <Divider />
          {renderTools(lockTools)}
          <SidebarMore aria-label="More tools">
            <svg width="18" height="10" fill="none" stroke="#fff" strokeWidth="2">
              <path d="M1 1l8 7 8-7" />
            </svg>
          </SidebarMore>
        </Sidebar>
        <Workspace>
          <Handle />
          <Handle $right />
          <ChartToolbar />
          <Shelf>
            <svg width="5" height="5">
              <path d="M0 4l2.500-3L5 4z" fill="#bbb" />
            </svg>
          </Shelf>
          <Panel>
            <PriceChart />
            <ChartLegend />
            <MarketStatus>Market Closed</MarketStatus>
            <Note>
              {noteText
                .split(/([\x21-\x7e]+)/)
                .map((part, i) => (i % 2 ? <span key={i}>{part}</span> : part))}
            </Note>
          </Panel>
          <RangeBar>
            {ranges.map(([name, width]) => (
              <Range key={name} $w={width}>
                {name}
              </Range>
            ))}
            <Range $w={66} $last>
              Go to...
            </Range>
            <Clock>
              <b>08:40:38</b> (UTC-4)
            </Clock>
            <Range $w={32}>%</Range>
            <Range $w={41}>log</Range>
            <Range $w={49} $on>
              auto
            </Range>
            <Range $w={41} $last aria-label="Scale settings">
              <Settings size={13} />
            </Range>
          </RangeBar>
        </Workspace>
      </Body>
      <TaskbarRow />
    </Page>
  )
}
